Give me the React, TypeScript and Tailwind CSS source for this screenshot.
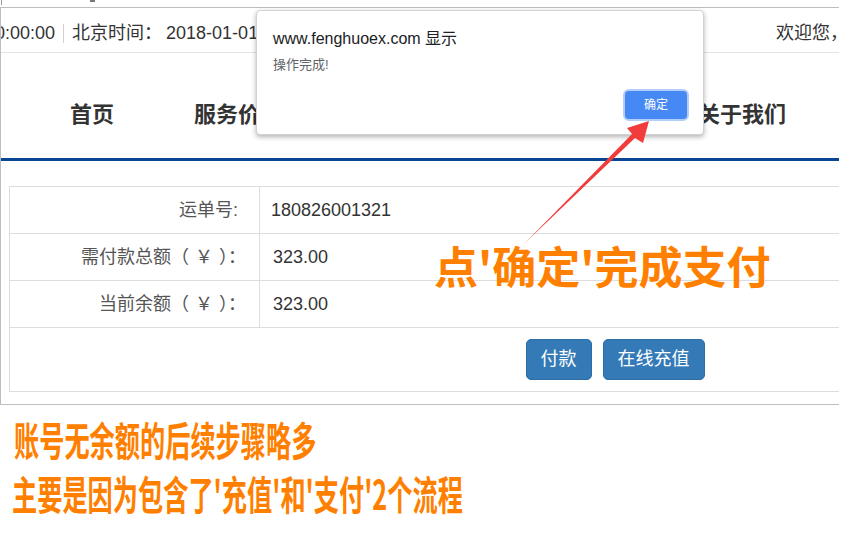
export default function App() {
  const rows = [
    { label: "运单号:", value: "180826001321", pad: "pl-[11px]", pr: "pr-[21px]" },
    { label: "需付款总额（\u2004￥\u2004）：", value: "323.00", pad: "pl-[13px]", pr: "pr-[13px]" },
    { label: "当前余额（\u2004￥\u2004）：", value: "323.00", pad: "pl-[13px]", pr: "pr-[13px]" },
  ];

  return (
    <div className="relative h-[558px] w-[850px] overflow-hidden bg-white font-['Liberation_Sans','Noto_Sans_CJK_SC',sans-serif] text-[#333]">
      {/* strip of the window above */}
      <div className="relative h-[7px]">
        <span className="absolute left-px top-0 h-[5px] w-px bg-[#999]" />
        <span className="absolute left-[90px] top-0 h-[2px] w-[5px] bg-[#777]" />
      </div>

      {/* page */}
      <div className="w-[839px] overflow-hidden border-y border-l border-[#bdbdbd]">
        <div className="flex h-[45px] items-center whitespace-nowrap border-b border-[#e4e4e4] pt-[6px] text-[18px]">
          <div className="flex w-[775px] shrink-0 items-center">
            <span className="-ml-[6px]">0:00:00</span>
            <span className="mx-[8px] h-[19px] w-px bg-[#d6d0c8]" />
            <span>北京时间：</span>
            <span className="ml-[4px]">2018-01-01 00:00:00</span>
          </div>
          <span>欢迎您，会员</span>
        </div>

        <nav className="flex h-[105px] items-center gap-20 whitespace-nowrap pl-[69px] pt-[13px] font-['Noto_Sans_CJK_SC',sans-serif] text-[22px] font-bold text-[#333]">
          <span>首页</span>
          <span>服务价格</span>
          <span>运单查询</span>
          <span>网点查询</span>
          <span>关于我们</span>
        </nav>
        <div className="h-[3px] bg-[#0a4595]" />

        <div className="pb-[12px] pl-[8px] pt-[25px]">
          <div className="w-[1211px] border-l border-t border-[#dddddd] text-[18px]">
            {rows.map((r) => (
              <div key={r.label} className="flex h-[47px] border-b border-[#dddddd]">
                <div className={`flex w-[250px] shrink-0 items-center justify-end whitespace-pre border-r border-[#dddddd] ${r.pr} text-[#555]`}>
                  {r.label}
                </div>
                <div className={`flex items-center ${r.pad} text-[#333]`}>{r.value}</div>
              </div>
            ))}
            <div className="flex h-[64px] items-center justify-center gap-[11px] border-b border-[#dddddd]">
              <button className="h-[41px] rounded-[5px] border border-[#2e6da4] bg-[#337ab7] px-[14px] text-[18px] text-white">
                付款
              </button>
              <button className="h-[41px] rounded-[5px] border border-[#2e6da4] bg-[#337ab7] px-[14px] text-[18px] text-white">
                在线充值
              </button>
            </div>
          </div>
        </div>
      </div>

      {/* notes under the page */}
      <div className="whitespace-nowrap pl-[14px] pt-[7px] font-['Noto_Sans_CJK_SC',sans-serif] text-[40px] font-bold leading-[54px] text-[#ff7f00]">
        <div className="origin-left scale-x-[0.63]">账号无余额的后续步骤略多</div>
        <div className="-ml-[2px] origin-left scale-x-[0.63]">主要是因为包含了'充值'和'支付'2个流程</div>
      </div>

      {/* browser alert */}
      <div className="absolute left-[256px] top-[10px] h-[125px] w-[448px] rounded-[4px] border border-[#d2d2d2] bg-white font-['Liberation_Sans','Noto_Sans_CJK_SC',sans-serif] shadow-[0_2px_5px_rgba(0,0,0,0.3)]">
        <div className="pl-[16px] pt-[16px] text-[16px] text-[#202124]">www.fenghuoex.com 显示</div>
        <div className="pl-[16px] pt-[4px] text-[13px] text-[#5f6368]">操作完成!</div>
        <button className="absolute right-[16px] top-[80px] h-[28px] w-[62px] rounded-[4px] bg-[#4688f4] text-[12px] text-white ring-2 ring-[#b1cdfa]">
          确定
        </button>
      </div>

      {/* annotation */}
      <div className="absolute left-[434px] top-[243px] whitespace-nowrap font-['Noto_Sans_CJK_SC',sans-serif] text-[44px] font-bold leading-none text-[#ff7f00]">
        点'确定'完成支付
      </div>
      <svg className="pointer-events-none absolute left-0 top-0" width="850" height="558">
        <polygon
          points="525,243 632,134 627,128 649,121 643,143 635,138"
          fill="#f23b3b"
        />
      </svg>
    </div>
  );
}
